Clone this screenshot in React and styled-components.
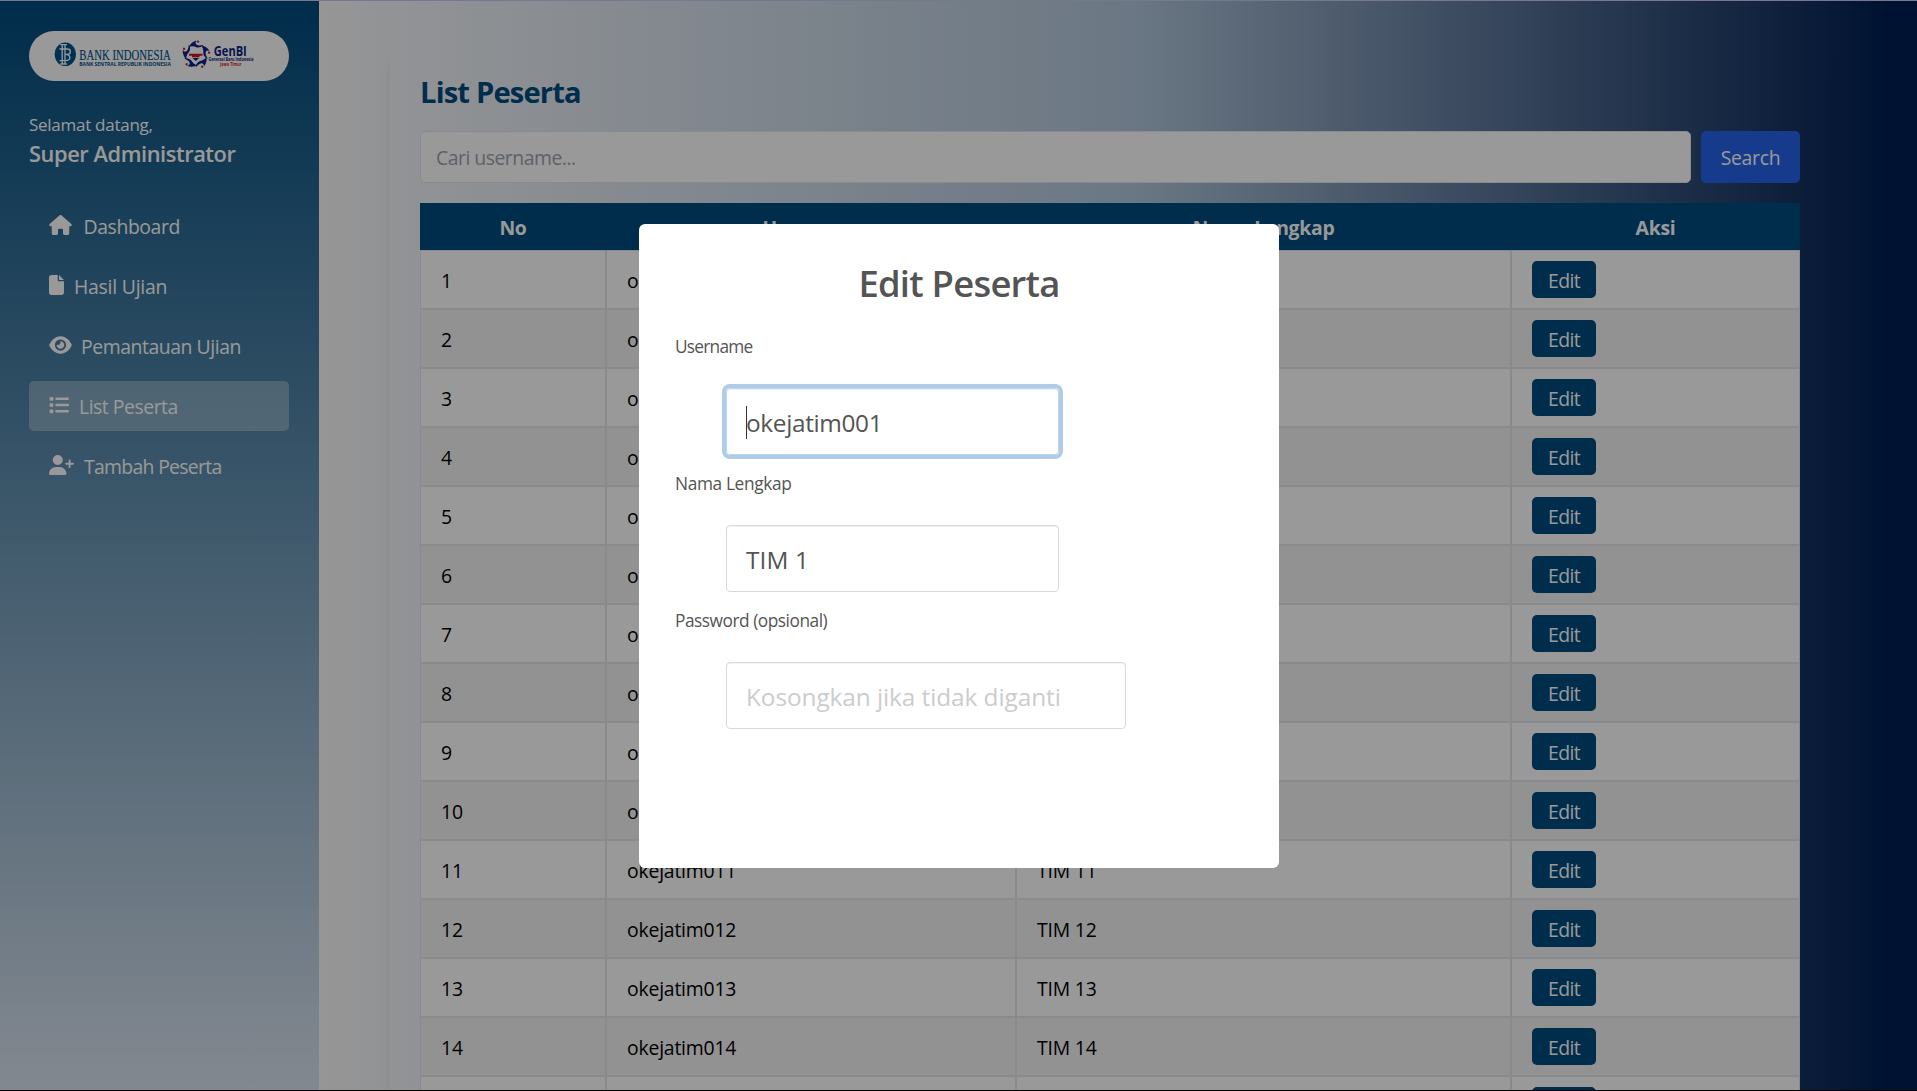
import React from 'react';
import styled, { createGlobalStyle, css } from 'styled-components';
import { FaHouse, FaFile, FaEye, FaList, FaUserPlus } from 'react-icons/fa6';

const Global = createGlobalStyle`
  *, *::before, *::after { box-sizing: border-box; }
  body { margin: 0; overflow: hidden; font-family: "Open Sans", "Noto Sans", sans-serif; }
  input, button { font-family: inherit; margin: 0; }
`;

const Frame = styled.div`
  display: grid;
  grid-template-rows: 1px 1fr 1px;
  height: 100vh;
  background: #000;
`;

const TopLine = styled.div`background: #777890;`;

const Page = styled.div`
  position: relative;
  display: flex;
  min-height: 0;
  overflow: hidden;
`;

const Sidebar = styled.aside`
  flex: 0 0 319px;
  padding: 30px 30px 0 29px;
  background: linear-gradient(to bottom, #004b7c, #dbe4f0);
`;

const LogoPill = styled.div`
  display: flex;
  align-items: center;
  height: 50px;
  border-radius: 25px;
  background: #fff;
`;

const Welcome = styled.div`
  margin-top: 32px;
  color: #fff;
`;

const Greeting = styled.p`
  margin: 0;
  font-size: 17px;
  line-height: 24px;
  letter-spacing: -0.27px;
`;

const UserName = styled.p`
  margin: 2px 0 0;
  font-size: 21.8px;
  line-height: 30px;
  font-weight: 600;
  letter-spacing: -0.42px;
`;

const Nav = styled.nav`
  display: flex;
  flex-direction: column;
  gap: 10px;
  margin-top: 32px;
`;

const NavItem = styled.a`
  display: flex;
  align-items: center;
  height: 50px;
  padding: 0 20px;
  border-radius: 5px;
  color: #fff;
  font-size: 19.4px;
  white-space: nowrap;
  letter-spacing: ${(p) => p.$track}px;
  ${(p) => p.$active && css`background: rgba(255, 255, 255, 0.3);`}
  svg {
    flex: none;
    width: ${(p) => p.$icon}px;
    height: 20px;
    margin: 0 ${(p) => p.$gap}px 2px 0;
  }
`;

const Main = styled.main`
  flex: 1;
  padding: 40px 87px 0 71px;
  background: linear-gradient(to right, #fafafc 0%, #b2c7dc 51%, #001f52 98%);
`;

const Card = styled.section`
  height: 1200px;
  padding: 31px 30px 30px;
  border-radius: 20px;
  box-shadow: 0 12px 19px -4px rgba(0, 0, 0, 0.09), 0 5px 8px -5px rgba(0, 0, 0, 0.06);
`;

const Heading = styled.h1`
  margin: 0 0 18px;
  color: #004b7f;
  font-size: 29.2px;
  line-height: 41px;
  font-weight: 700;
  letter-spacing: -0.85px;
`;

const SearchRow = styled.div`
  display: flex;
  gap: 10px;
  height: 52px;
`;

const SearchInput = styled.input`
  flex: 1;
  padding: 1px 15px 0;
  border: 1px solid #e5e7eb;
  border-radius: 5px;
  background: #fff;
  font-size: 19.4px;
  letter-spacing: -0.5px;
  outline: 0;
  &::placeholder { color: #9ca3af; opacity: 1; }
`;

const SearchButton = styled.button`
  width: 99px;
  padding: 1px 0 0;
  border: 0;
  border-radius: 5px;
  background: #2563eb;
  color: #fff;
  font-size: 19.4px;
  letter-spacing: -0.3px;
`;

const Table = styled.table`
  width: 1380px;
  margin-top: 20px;
  table-layout: fixed;
  border-spacing: 0;
`;

const Col = styled.col`width: ${(p) => p.$w}px;`;

const HeadCell = styled.th`
  height: 47px;
  padding: 1px 0 0;
  background: #004b7f;
  color: #fff;
  font-size: 19.4px;
  line-height: 27px;
  font-weight: 700;
  letter-spacing: -0.3px;
`;

const Row = styled.tr`
  background: #fff;
  &:nth-child(even) { background: #f3f4f6; }
`;

const Cell = styled.td`
  height: 59px;
  padding: ${(p) => (p.$action ? '0 20px' : '2px 20px 0')};
  border: 1px solid #e5e7eb;
  color: #000;
  font-size: 19.4px;
  line-height: 27px;
  letter-spacing: -0.2px;
`;

const EditButton = styled.button`
  display: block;
  width: 64px;
  height: 37px;
  padding: 1px 0 0;
  border: 0;
  border-radius: 5px;
  background: #004b7f;
  color: #fff;
  font-size: 19.4px;
  letter-spacing: -0.6px;
`;

const Overlay = styled.div`
  position: absolute;
  inset: -1px 0 0;
  display: flex;
  align-items: center;
  justify-content: center;
  background: rgba(0, 0, 0, 0.4);
`;

const Modal = styled.div`
  width: 640px;
  height: 644px;
  margin: 2px 1px 0 2px;
  padding: 36px 36px 0;
  border-radius: 6px;
  background: #fff;
  color: #545454;
`;

const ModalTitle = styled.h2`
  margin: 0 0 29px;
  text-align: center;
  font-size: 36.4px;
  line-height: 46px;
  font-weight: 600;
  letter-spacing: -0.75px;
`;

const Field = styled.label`
  display: flex;
  flex-direction: column;
  align-items: flex-start;
  height: 137px;
`;

const FieldLabel = styled.span`
  font-size: 17.3px;
  line-height: 24px;
  letter-spacing: ${(p) => p.$track}px;
`;

const InputShell = styled.span`
  display: flex;
  align-items: center;
  width: ${(p) => p.$w}px;
  height: 67px;
  margin: 29px 0 0 51px;
  padding: 2px 19px 0;
  border: 1px solid #d9d9d9;
  border-radius: 4px;
  box-shadow: inset 0 1px 1px rgba(0, 0, 0, 0.06);
  ${(p) => p.$focused && css`
    border-color: #b4dbed;
    box-shadow: 0 0 0 4px #b0cbe6, inset 0 1px 1px rgba(0, 0, 0, 0.06);
  `}
`;

const Caret = styled.span`
  width: 1px;
  height: 33px;
  margin-right: -1px;
  background: #333;
`;

const FieldInput = styled.input`
  width: 100%;
  padding: 0;
  border: 0;
  outline: 0;
  background: transparent;
  color: #545454;
  font-size: 24.4px;
  line-height: 34px;
  letter-spacing: ${(p) => p.$track}px;
  &::placeholder { color: #ccc; opacity: 1; }
`;

const navItems = [
  { label: 'Dashboard', Icon: FaHouse, icon: 23, gap: 11.5, track: -0.4 },
  { label: 'Hasil Ujian', Icon: FaFile, icon: 15, gap: 10, track: -0.23 },
  { label: 'Pemantauan Ujian', Icon: FaEye, icon: 23, gap: 9, track: -0.44 },
  { label: 'List Peserta', Icon: FaList, icon: 20, gap: 10, track: -0.47, active: true },
  { label: 'Tambah Peserta', Icon: FaUserPlus, icon: 25, gap: 10, track: -0.69 },
];

const participants = Array.from({ length: 15 }, (_, i) => ({
  no: i + 1,
  username: `okejatim${String(i + 1).padStart(3, '0')}`,
  name: `TIM ${i + 1}`,
}));

function Logos() {
  return (
    <svg width="260" height="50" viewBox="29 31 260 50">
      <ellipse cx="65.3" cy="54.3" rx="10.6" ry="11.8" fill="#00508c" />
      <g fill="none" stroke="#fff" strokeWidth="1.3">
        <path d="M62.2 45v18.5M65 45v18.5M60.3 44.6h6.6M60.3 64h6.6" />
        <path d="M59.5 49h7.5c4.5 0 4.5 5.3 0 5.3h-2c6.5 0 6.5 6.3 0 6.3h-5.5" />
      </g>
      <text x="79.3" y="59.6" textLength="91.5" lengthAdjust="spacingAndGlyphs" fontFamily="Liberation Serif, serif" fontSize="14.5" fill="#00508c" stroke="#00508c" strokeWidth=".15">BANK INDONESIA</text>
      <text x="79.3" y="66" textLength="91.5" lengthAdjust="spacingAndGlyphs" fontFamily="Open Sans, sans-serif" fontWeight="700" fontSize="4.8" fill="#00508c">BANK SENTRAL REPUBLIK INDONESIA</text>
      {[0, 72, 144, 216, 288].map((a) => (
        <g key={a} transform={`translate(196 54.8) rotate(${a})`}>
          <path d="M-7.5 -7.5Q-5 -12.5 0.5 -14.2Q-2 -10.500 2 -9.500Q4.500 -9 7.500 -10Q5 -6.800 1 -7.300Q-4 -9.500 -7.500 -7.500Z" fill="#0b2384" />
          <circle cx="2" cy="-13.2" r="1.2" fill="#e01b24" />
        </g>
      ))}
      <path d="M189.5 53.500a6.500 5 0 0 1 12.500 0z" fill="#fff" />
      <path d="M189 53.800h13.500v2h-3v1.500h-7.500v-1.500h-3z" fill="#d8101c" />
      <path d="M192.500 58h6.500l-3.200 3z" fill="#0b2384" />
      <text x="213.8" y="56.2" textLength="33" lengthAdjust="spacingAndGlyphs" fontFamily="Open Sans, sans-serif" fontWeight="700" fontSize="14" fill="#0b2384">GenBI</text>
      <text x="208.5" y="61" textLength="45" lengthAdjust="spacingAndGlyphs" fontFamily="Open Sans, sans-serif" fontWeight="700" fontSize="4.6" fill="#0b2384">Generasi Baru Indonesia</text>
      <text x="220" y="66" textLength="21.5" lengthAdjust="spacingAndGlyphs" fontFamily="Open Sans, sans-serif" fontWeight="700" fontSize="4.6" fill="#e01b24">Jawa Timur</text>
    </svg>
  );
}

function EditDialog() {
  return (
    <Overlay>
      <Modal role="dialog">
        <ModalTitle>Edit Peserta</ModalTitle>
        <Field>
          <FieldLabel $track={-0.75}>Username</FieldLabel>
          <InputShell $w={333} $focused>
            <Caret />
            <FieldInput $track={-0.35} defaultValue="okejatim001" />
          </InputShell>
        </Field>
        <Field>
          <FieldLabel $track={-0.36}>Nama Lengkap</FieldLabel>
          <InputShell $w={333}>
            <FieldInput $track={0.1} defaultValue="TIM 1" />
          </InputShell>
        </Field>
        <Field>
          <FieldLabel $track={-0.47}>Password (opsional)</FieldLabel>
          <InputShell $w={400}>
            <FieldInput $track={-0.08} placeholder="Kosongkan jika tidak diganti" />
          </InputShell>
        </Field>
      </Modal>
    </Overlay>
  );
}

export default function App() {
  return (
    <Frame>
      <Global />
      <TopLine />
      <Page>
        <Sidebar>
          <LogoPill><Logos /></LogoPill>
          <Welcome>
            <Greeting>Selamat datang,</Greeting>
            <UserName>Super Administrator</UserName>
          </Welcome>
          <Nav>
            {navItems.map(({ label, Icon, icon, gap, track, active }) => (
              <NavItem key={label} $icon={icon} $gap={gap} $track={track} $active={active}>
                <Icon />
                {label}
              </NavItem>
            ))}
          </Nav>
        </Sidebar>
        <Main>
          <Card>
            <Heading>List Peserta</Heading>
            <SearchRow>
              <SearchInput placeholder="Cari username..." />
              <SearchButton>Search</SearchButton>
            </SearchRow>
            <Table>
              <colgroup>
                <Col $w={186} />
                <Col $w={410} />
                <Col $w={495} />
                <Col $w={289} />
              </colgroup>
              <thead>
                <tr>
                  <HeadCell>No</HeadCell>
                  <HeadCell>Username</HeadCell>
                  <HeadCell>Nama Lengkap</HeadCell>
                  <HeadCell>Aksi</HeadCell>
                </tr>
              </thead>
              <tbody>
                {participants.map((p) => (
                  <Row key={p.no}>
                    <Cell>{p.no}</Cell>
                    <Cell>{p.username}</Cell>
                    <Cell>{p.name}</Cell>
                    <Cell $action><EditButton>Edit</EditButton></Cell>
                  </Row>
                ))}
              </tbody>
            </Table>
          </Card>
        </Main>
        <EditDialog />
      </Page>
      <div />
    </Frame>
  );
}
